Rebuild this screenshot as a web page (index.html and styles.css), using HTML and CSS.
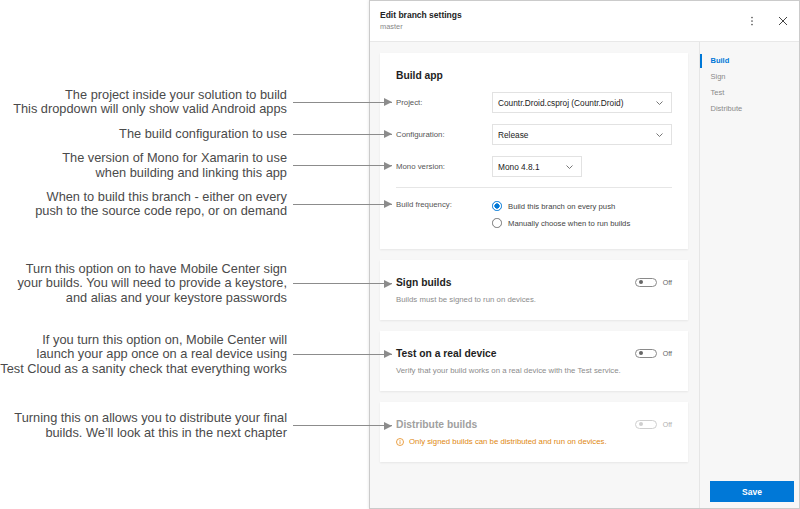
FILE: index.html
```html
<!DOCTYPE html>
<html lang="en">
<head>
<meta charset="utf-8">
<title>Edit branch settings</title>
<link rel="stylesheet" href="styles.css">
</head>
<body>
<div class="page">
  <div class="notes">
    <div class="callout c1">
      <div class="note-text"><span>The project inside your solution to build</span><span>This dropdown will only show valid Android apps</span></div>
      <div class="arrow"></div>
    </div>
    <div class="callout c2">
      <div class="note-text"><span>The build configuration to use</span></div>
      <div class="arrow"></div>
    </div>
    <div class="callout c3">
      <div class="note-text"><span>The version of Mono for Xamarin to use</span><span>when building and linking this app</span></div>
      <div class="arrow"></div>
    </div>
    <div class="callout c4">
      <div class="note-text"><span>When to build this branch - either on every</span><span>push to the source code repo, or on demand</span></div>
      <div class="arrow"></div>
    </div>
    <div class="callout c5">
      <div class="note-text"><span>Turn this option on to have Mobile Center sign</span><span>your builds. You will need to provide a keystore,</span><span>and alias and your keystore passwords</span></div>
      <div class="arrow"></div>
    </div>
    <div class="callout c6">
      <div class="note-text"><span>If you turn this option on, Mobile Center will</span><span>launch your app once on a real device using</span><span>Test Cloud as a sanity check that everything works</span></div>
      <div class="arrow"></div>
    </div>
    <div class="callout c7">
      <div class="note-text"><span>Turning this on allows you to distribute your final</span><span>builds. We’ll look at this in the next chapter</span></div>
      <div class="arrow"></div>
    </div>
  </div>

  <div class="panel">
    <header class="panel-head">
      <div class="head-titles">
        <div class="head-title">Edit branch settings</div>
        <div class="head-sub">master</div>
      </div>
      <div class="head-actions">
        <button class="icon-btn" aria-label="More">
          <svg width="16" height="16" viewBox="0 0 16 16"><circle cx="8" cy="4.5" r="0.85" fill="#555"/><circle cx="8" cy="8" r="0.85" fill="#555"/><circle cx="8" cy="11.5" r="0.85" fill="#555"/></svg>
        </button>
        <button class="icon-btn" aria-label="Close">
          <svg width="16" height="16" viewBox="0 0 16 16"><path d="M4 4 L12 12 M12 4 L4 12" stroke="#444" stroke-width="1" fill="none"/></svg>
        </button>
      </div>
    </header>

    <div class="panel-body">
      <main class="content">
        <section class="card card-build">
          <h2 class="card-title build-title">Build app</h2>
          <div class="form-row">
            <span class="label">Project:</span>
            <div class="select"><span>Countr.Droid.csproj (Countr.Droid)</span><svg class="chev" width="7" height="4" viewBox="0 0 7 4"><polyline points="0.5,0.5 3.5,3.5 6.5,0.5" fill="none" stroke="#666" stroke-width="0.9"/></svg></div>
          </div>
          <div class="form-row">
            <span class="label">Configuration:</span>
            <div class="select"><span>Release</span><svg class="chev" width="7" height="4" viewBox="0 0 7 4"><polyline points="0.5,0.5 3.5,3.5 6.5,0.5" fill="none" stroke="#666" stroke-width="0.9"/></svg></div>
          </div>
          <div class="form-row last">
            <span class="label">Mono version:</span>
            <div class="select narrow"><span>Mono 4.8.1</span><svg class="chev" width="7" height="4" viewBox="0 0 7 4"><polyline points="0.5,0.5 3.5,3.5 6.5,0.5" fill="none" stroke="#666" stroke-width="0.9"/></svg></div>
          </div>
          <hr class="sep">
          <div class="freq">
            <span class="label freq-label">Build frequency:</span>
            <div class="radios">
              <div class="radio"><span class="dot on"></span>Build this branch on every push</div>
              <div class="radio"><span class="dot"></span>Manually choose when to run builds</div>
            </div>
          </div>
        </section>

        <section class="card">
          <div class="card-head">
            <h2 class="card-title">Sign builds</h2>
            <div class="toggle-wrap"><span class="toggle"><span class="knob"></span></span><span class="toggle-label">Off</span></div>
          </div>
          <p class="card-desc">Builds must be signed to run on devices.</p>
        </section>

        <section class="card">
          <div class="card-head">
            <h2 class="card-title">Test on a real device</h2>
            <div class="toggle-wrap"><span class="toggle"><span class="knob"></span></span><span class="toggle-label">Off</span></div>
          </div>
          <p class="card-desc">Verify that your build works on a real device with the Test service.</p>
        </section>

        <section class="card disabled">
          <div class="card-head">
            <h2 class="card-title">Distribute builds</h2>
            <div class="toggle-wrap"><span class="toggle"><span class="knob"></span></span><span class="toggle-label">Off</span></div>
          </div>
          <p class="warn"><svg width="8" height="8" viewBox="0 0 8 8"><circle cx="4" cy="4" r="3.5" fill="none" stroke="#e48a1a" stroke-width="0.8"/><rect x="3.6" y="3.3" width="0.8" height="2.6" fill="#e48a1a"/><rect x="3.6" y="2" width="0.8" height="0.8" fill="#e48a1a"/></svg><span>Only signed builds can be distributed and run on devices.</span></p>
        </section>
      </main>

      <nav class="side">
        <a class="side-item active" href="#">Build</a>
        <a class="side-item" href="#">Sign</a>
        <a class="side-item" href="#">Test</a>
        <a class="side-item" href="#">Distribute</a>
        <button class="save">Save</button>
      </nav>
    </div>
  </div>
</div>
</body>
</html>
```

FILE: styles.css
```css
* { box-sizing: border-box; margin: 0; padding: 0; }

body {
  margin: 0;
  background: #fff;
  font-family: "Liberation Sans", Arial, sans-serif;
}

.page {
  display: flex;
  width: 800px;
  height: 509px;
  overflow: hidden;
}

/* ---------- annotations ---------- */
.notes {
  width: 369px;
  flex: none;
  position: relative;
  z-index: 2;
}

.callout {
  position: absolute;
  left: 0;
  width: 392px;
  display: flex;
  align-items: center;
}
.c1 { top: 87.75px; }
.c2 { top: 126.75px; }
.c3 { top: 151px; }
.c4 { top: 189.5px; }
.c5 { top: 261.75px; }
.c6 { top: 332.5px; }
.c7 { top: 411px; }

.note-text {
  width: 287px;
  flex: none;
  display: flex;
  flex-direction: column;
  align-items: flex-end;
  font-size: 12.8px;
  line-height: 14.5px;
  color: #4a4a4a;
  white-space: nowrap;
}

.arrow {
  flex: 1;
  margin-left: 6px;
  height: 1px;
  background: #8c8c8c;
  position: relative;
}
.arrow::after {
  content: "";
  position: absolute;
  right: 0;
  top: -3.5px;
  border-left: 8px solid #8c8c8c;
  border-top: 4px solid transparent;
  border-bottom: 4px solid transparent;
}

/* ---------- panel ---------- */
.panel {
  width: 431px;
  flex: none;
  border: 1px solid #cbcbcb;
  box-shadow: 0 0 3px rgba(0, 0, 0, 0.12);
  background: #f7f7f7;
  display: flex;
  flex-direction: column;
}

.panel-head {
  height: 41px;
  flex: none;
  background: #fff;
  border-bottom: 1px solid #e8e8e8;
  display: flex;
  align-items: center;
  padding: 0 8px 0 10px;
}
.head-title {
  font-size: 8.5px;
  font-weight: bold;
  line-height: 11px;
  color: #222;
}
.head-sub {
  font-size: 7.4px;
  line-height: 11px;
  color: #888;
}
.head-actions {
  margin-left: auto;
  display: flex;
  gap: 15px;
}
.icon-btn {
  width: 16px;
  height: 16px;
  border: 0;
  background: none;
  display: flex;
  align-items: center;
  justify-content: center;
}

.panel-body {
  flex: 1;
  display: flex;
  min-height: 0;
}

.content {
  flex: 1;
  padding: 11px 11px 0 10px;
  display: flex;
  flex-direction: column;
  gap: 11px;
}

.card {
  background: #fff;
  box-shadow: 0 1px 2px rgba(0, 0, 0, 0.07);
  padding: 16px 16px 15px 16px;
}
.card-build { padding-bottom: 17px; }

.card-title {
  font-size: 10.3px;
  font-weight: bold;
  line-height: 13px;
  color: #1e1e1e;
}
.build-title { margin-bottom: 10px; }

.form-row {
  display: flex;
  align-items: center;
  margin-bottom: 11px;
}
.form-row.last { margin-bottom: 0; }

.label {
  width: 96px;
  flex: none;
  font-size: 7.8px;
  color: #555;
}

.select {
  width: 180px;
  height: 21px;
  border: 1px solid #e2e2e2;
  background: #fff;
  display: flex;
  align-items: center;
  justify-content: space-between;
  padding: 0 8px 0 5px;
  font-size: 8.3px;
  color: #222;
}
.select.narrow { width: 90px; }

.sep {
  border: 0;
  border-top: 1px solid #e6e6e6;
  margin: 9.5px 0 10px;
}

.freq {
  display: flex;
  align-items: flex-start;
}
.freq-label {
  margin-top: 1px;
  line-height: 11px;
}
.radio {
  display: flex;
  align-items: center;
  height: 17px;
  font-size: 7.7px;
  color: #444;
}
.dot {
  width: 9.5px;
  height: 9.5px;
  border-radius: 50%;
  border: 1px solid #777;
  background: #fff;
  margin-right: 6.5px;
  flex: none;
}
.dot.on {
  border: 1.2px solid #0078d7;
  background: radial-gradient(circle, #0078d7 0 2.4px, #fff 2.9px);
}

.card-head {
  display: flex;
  align-items: center;
  justify-content: space-between;
}
.card-desc {
  margin-top: 6px;
  font-size: 7.8px;
  line-height: 10px;
  color: #8c8c8c;
}

.toggle-wrap {
  display: flex;
  align-items: center;
  gap: 6px;
}
.toggle {
  width: 21.5px;
  height: 9px;
  border: 1px solid #8a8a8a;
  border-radius: 5px;
  display: flex;
  align-items: center;
  padding-left: 2.5px;
}
.knob {
  width: 4px;
  height: 4px;
  border-radius: 50%;
  background: #666;
}
.toggle-label {
  font-size: 7px;
  color: #666;
}

.disabled .card-title { color: #a0a0a0; }
.disabled .toggle { border-color: #cfcfcf; }
.disabled .knob { background: #cfcfcf; }
.disabled .toggle-label { color: #b0b0b0; }

.warn {
  margin-top: 6px;
  display: flex;
  align-items: center;
  gap: 5px;
  font-size: 7.8px;
  line-height: 10px;
  color: #e0880f;
}

/* ---------- side nav ---------- */
.side {
  width: 100px;
  flex: none;
  border-left: 1px solid #e6e6e6;
  display: flex;
  flex-direction: column;
  padding-top: 12px;
}
.side-item {
  display: block;
  font-size: 7.5px;
  line-height: 14px;
  margin-bottom: 2px;
  padding-left: 8.5px;
  border-left: 2px solid transparent;
  color: #8a8a8a;
  text-decoration: none;
}
.side-item.active {
  border-left-color: #0078d7;
  color: #0078d7;
  font-weight: bold;
}
.save {
  margin: auto 5px 6px 10px;
  height: 21px;
  border: 0;
  background: #0078d7;
  color: #fff;
  font-family: "Liberation Sans", Arial, sans-serif;
  font-size: 8.5px;
  font-weight: bold;
}
```
